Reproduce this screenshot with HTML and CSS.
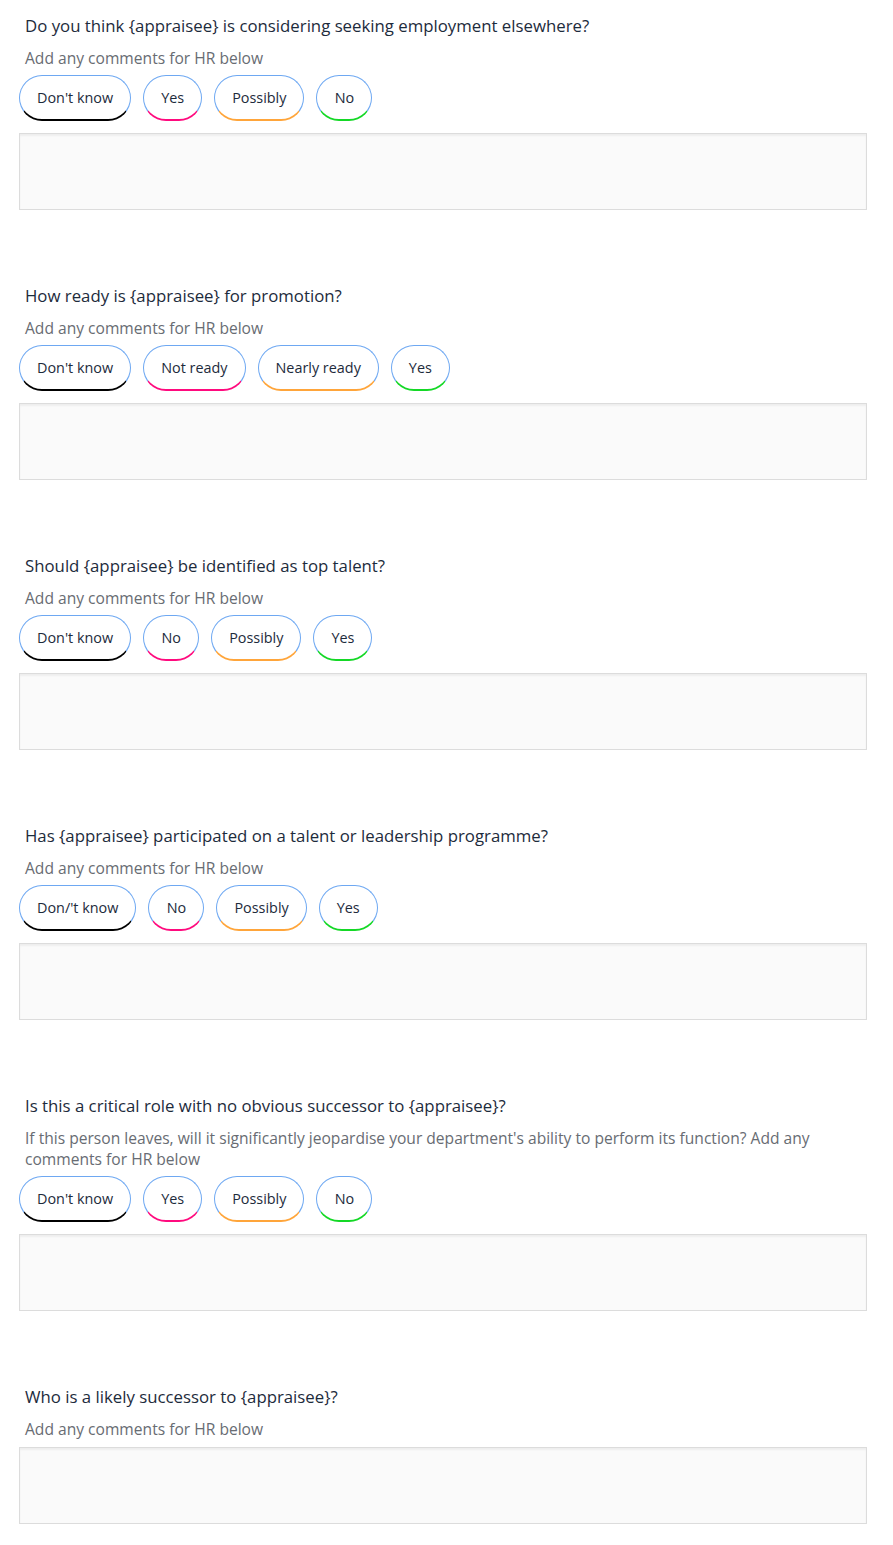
FILE: index.html
```html
<!DOCTYPE html>
<html lang="en">
<head>
  <meta charset="UTF-8">
  <title>HR Questions</title>
  <meta name="viewport" content="width=device-width, initial-scale=1.0">
  <link rel="stylesheet" href="styles.css">
</head>
<body>
  <div class="form">
    <!-- Seeking employment -->
    <div class="question">
      <div class="q-title">Do you think {appraisee} is considering seeking employment elsewhere?</div>
      <div class="q-hint">Add any comments for HR below</div>
      <div class="choices">
        <button class="choice c-black">Don't know</button>
        <button class="choice c-pink">Yes</button>
        <button class="choice c-orange">Possibly</button>
        <button class="choice c-green">No</button>
      </div>
      <textarea class="comments" aria-label="Comments"></textarea>
    </div>

    <!-- Promotion -->
    <div class="question">
      <div class="q-title">How ready is {appraisee} for promotion?</div>
      <div class="q-hint">Add any comments for HR below</div>
      <div class="choices">
        <button class="choice c-black">Don't know</button>
        <button class="choice c-pink">Not ready</button>
        <button class="choice c-orange">Nearly ready</button>
        <button class="choice c-green">Yes</button>
      </div>
      <textarea class="comments" aria-label="Comments"></textarea>
    </div>

    <!-- Top talent -->
    <div class="question">
      <div class="q-title">Should {appraisee} be identified as top talent?</div>
      <div class="q-hint">Add any comments for HR below</div>
      <div class="choices">
        <button class="choice c-black">Don't know</button>
        <button class="choice c-pink">No</button>
        <button class="choice c-orange">Possibly</button>
        <button class="choice c-green">Yes</button>
      </div>
      <textarea class="comments" aria-label="Comments"></textarea>
    </div>

    <!-- Programme -->
    <div class="question">
      <div class="q-title">Has {appraisee} participated on a talent or leadership programme?</div>
      <div class="q-hint">Add any comments for HR below</div>
      <div class="choices">
        <button class="choice c-black">Don/'t know</button>
        <button class="choice c-pink">No</button>
        <button class="choice c-orange">Possibly</button>
        <button class="choice c-green">Yes</button>
      </div>
      <textarea class="comments" aria-label="Comments"></textarea>
    </div>

    <!-- Critical role -->
    <div class="question">
      <div class="q-title">Is this a critical role with no obvious successor to {appraisee}?</div>
      <div class="q-hint">If this person leaves, will it significantly jeopardise your department's ability to perform its function? Add any comments for HR below</div>
      <div class="choices">
        <button class="choice c-black">Don't know</button>
        <button class="choice c-pink">Yes</button>
        <button class="choice c-orange">Possibly</button>
        <button class="choice c-green">No</button>
      </div>
      <textarea class="comments" aria-label="Comments"></textarea>
    </div>

    <!-- Successor -->
    <div class="question">
      <div class="q-title">Who is a likely successor to {appraisee}?</div>
      <div class="q-hint">Add any comments for HR below</div>
      <textarea class="comments" aria-label="Comments"></textarea>
    </div>
  </div>
</body>
</html>
```

FILE: styles.css
```css
html, body {
  margin: 0;
  background: #fff;
}
body {
  font-family: "Open Sans", "Noto Sans", sans-serif;
  color: #1d2b3c;
}
.form {
  padding: 15px 26px 0 19px;
  display: flex;
  flex-direction: column;
  gap: 75px;
}
.question {
  display: flex;
  flex-direction: column;
}
.q-title {
  font-size: 16.8px;
  line-height: 22px;
  padding-left: 6px;
  color: #1d2b3c;
}
.q-hint {
  font-size: 15.6px;
  line-height: 21px;
  padding-left: 6px;
  margin-top: 11px;
  color: #686c73;
}
.choices {
  display: flex;
  gap: 12px;
  margin-top: 6px;
}
.choice {
  font-family: "Open Sans", "Noto Sans", sans-serif;
  font-size: 14.4px;
  line-height: 20px;
  color: #1d2b3c;
  background: #fff;
  border: 1px solid #6ea8f2;
  border-bottom-width: 2px;
  border-radius: 23px;
  padding: 12px 17px 11px;
  min-width: 56px;
  cursor: pointer;
}
.c-black { border-bottom-color: #000; }
.c-pink { border-bottom-color: #ff0a7e; }
.c-orange { border-bottom-color: #ffa53a; }
.c-green { border-bottom-color: #14d826; }
.comments {
  display: block;
  box-sizing: border-box;
  width: 100%;
  height: 77px;
  margin-top: 12px;
  background: #fafafa;
  border: 1px solid #dcdcdc;
  box-shadow: inset 0 2px 2px rgba(0, 0, 0, 0.05);
  resize: none;
  font-family: inherit;
}
.q-hint + .comments {
  margin-top: 7px;
}
```
